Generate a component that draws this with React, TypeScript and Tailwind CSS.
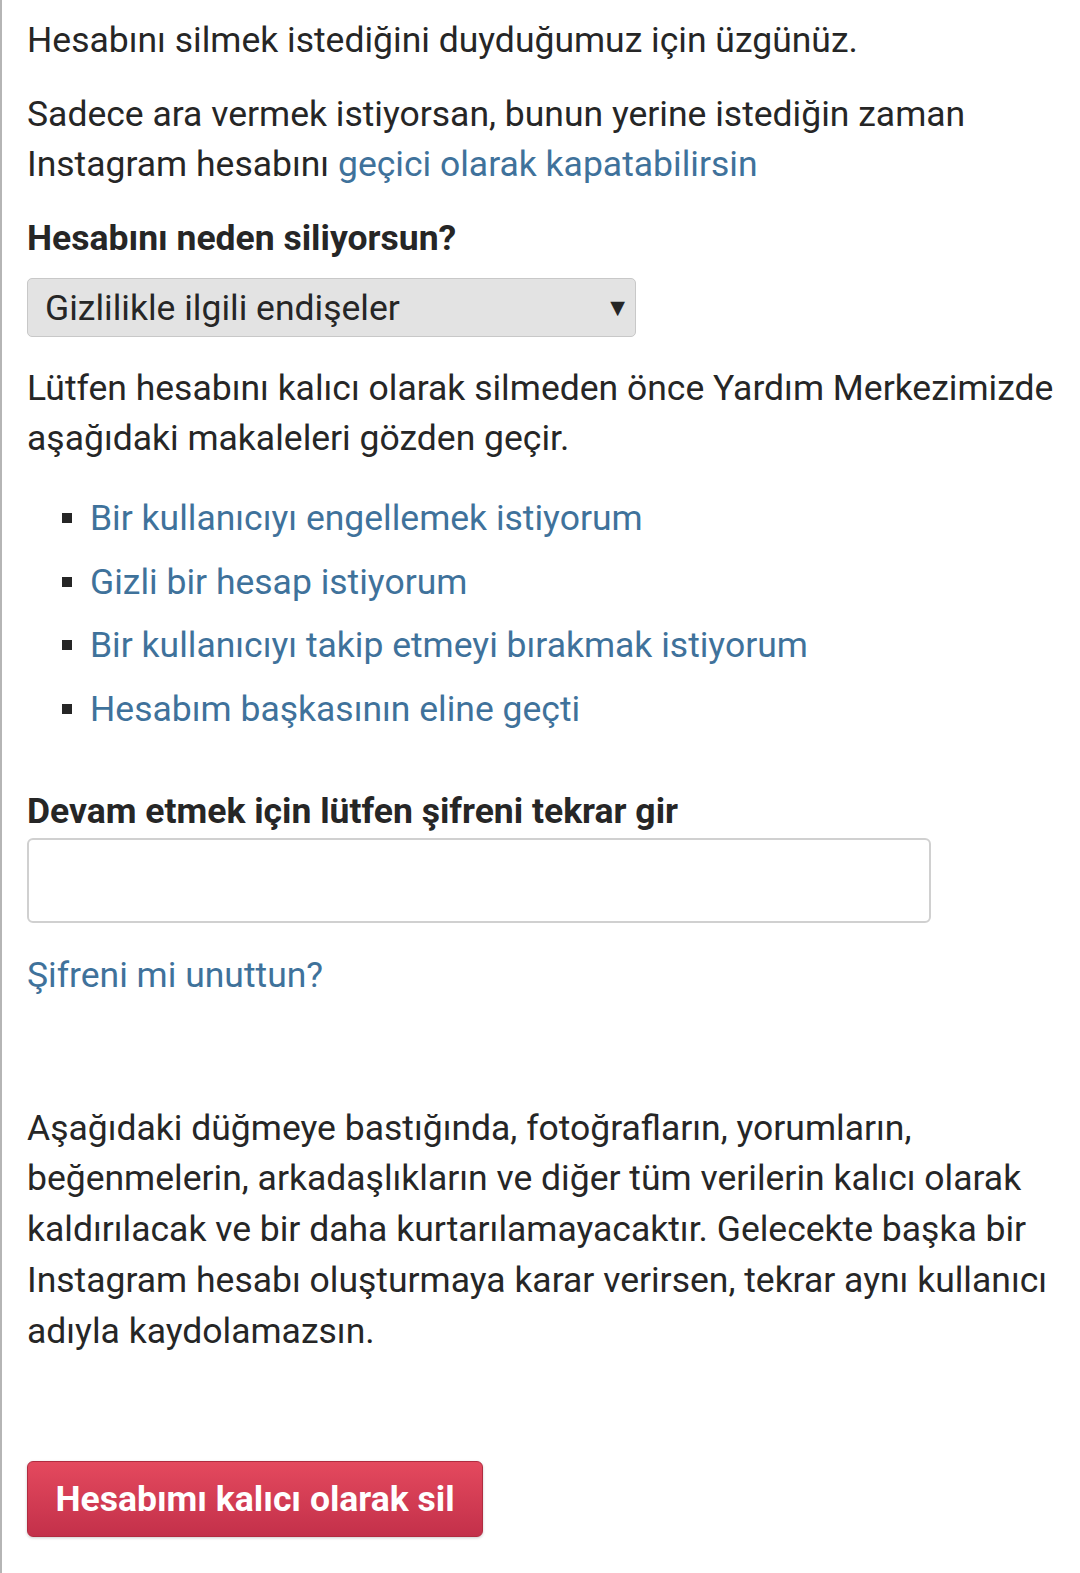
import React from 'react';

const links = [
  'Bir kullanıcıyı engellemek istiyorum',
  'Gizli bir hesap istiyorum',
  'Bir kullanıcıyı takip etmeyi bırakmak istiyorum',
  'Hesabım başkasının eline geçti',
];

export default function App() {
  return (
    <div className="min-h-[1573px] w-[1080px] bg-white border-l-2 border-[#b5b5b5] font-['Roboto',sans-serif] text-[#262626] text-[35.5px] leading-[50px]">
      <div className="pl-[25px] pr-2 pt-[15px]">
        <p>Hesabını silmek istediğini duyduğumuz için üzgünüz.</p>

        <p className="mt-[24px]">
          Sadece ara vermek istiyorsan, bunun yerine istediğin zaman
          <br />
          Instagram hesabını <a className="text-[#3f729b]">geçici olarak kapatabilirsin</a>
        </p>

        <h2 className="mt-[24px] font-bold">Hesabını neden siliyorsun?</h2>

        <div className="mt-[15px] w-[609px] h-[59px] flex items-center justify-between pl-[17px] pr-[5px] bg-[#e3e3e3] border border-[#c8c8c8] rounded-[5px]">
          <span>Gizlilikle ilgili endişeler</span>
          <span className="text-[25px]">▼</span>
        </div>

        <p className="mt-[26px]">
          Lütfen hesabını kalıcı olarak silmeden önce Yardım Merkezimizde
          <br />
          aşağıdaki makaleleri gözden geçir.
        </p>

        <ul className="mt-[30px] flex flex-col gap-[13.5px]">
          {links.map((t) => (
            <li key={t} className="flex items-center">
              <span className="ml-[35px] mr-[18px] w-[10px] h-[10px] bg-[#262626]" />
              <a className="text-[#3f729b]">{t}</a>
            </li>
          ))}
        </ul>

        <h2 className="mt-[52px] font-bold">Devam etmek için lütfen şifreni tekrar gir</h2>

        <input
          type="password"
          className="mt-[2px] block w-[904px] h-[85px] border-2 border-[#d0d0d0] rounded-[6px] bg-white"
        />

        <a className="mt-[27px] block text-[#3f729b]">Şifreni mi unuttun?</a>

        <p className="mt-[103px] leading-[50.8px]">
          Aşağıdaki düğmeye bastığında, fotoğrafların, yorumların,
          <br />
          beğenmelerin, arkadaşlıkların ve diğer tüm verilerin kalıcı olarak
          <br />
          kaldırılacak ve bir daha kurtarılamayacaktır. Gelecekte başka bir
          <br />
          Instagram hesabı oluşturmaya karar verirsen, tekrar aynı kullanıcı
          <br />
          adıyla kaydolamazsın.
        </p>

        <button className="mt-[105px] w-[456px] h-[76px] rounded-[6px] border border-[#b02c40] bg-gradient-to-b from-[#e4495e] to-[#c3304a] text-white font-bold text-[35.5px] shadow-[0_1px_3px_rgba(0,0,0,0.2)]">
          Hesabımı kalıcı olarak sil
        </button>
      </div>
    </div>
  );
}
